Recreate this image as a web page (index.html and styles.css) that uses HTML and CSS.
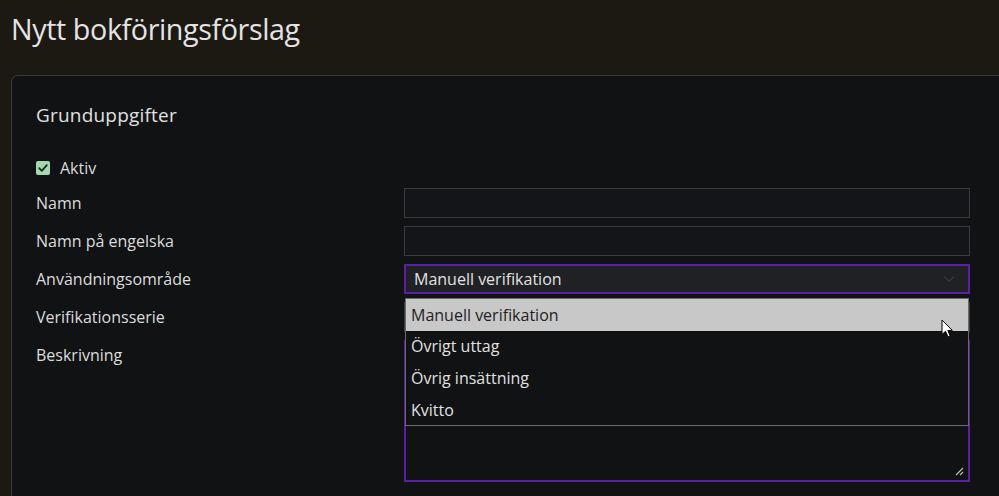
FILE: index.html
```html
<!DOCTYPE html>
<html lang="sv">
<head>
<meta charset="utf-8">
<title>Nytt bokföringsförslag</title>
<link rel="stylesheet" href="styles.css">
</head>
<body>
<h1 class="page-title">Nytt bokföringsförslag</h1>
<section class="card">
  <h2 class="card-title">Grunduppgifter</h2>
  <label class="check-row">
    <span class="checkbox"><svg viewBox="0 0 14 14" width="14" height="14"><path d="M3.2 7.2 L5.8 9.8 L10.8 4.2" fill="none" stroke="#1b2a1e" stroke-width="1.8" stroke-linecap="round" stroke-linejoin="round"/></svg></span>
    <span>Aktiv</span>
  </label>
  <div class="form-grid">
    <div class="label">Namn</div>
    <div class="field input"></div>
    <div class="label">Namn på engelska</div>
    <div class="field input"></div>
    <div class="label">Användningsområde</div>
    <div class="field-wrap">
      <div class="field select focused">
        <span>Manuell verifikation</span>
        <svg class="chev" viewBox="0 0 12 8" width="12" height="8"><path d="M1 1.5 L6 6.2 L11 1.5" fill="none" stroke="#34363a" stroke-width="1.4"/></svg>
      </div>
      <ul class="dropdown">
        <li class="opt active">Manuell verifikation</li>
        <li class="opt">Övrigt uttag</li>
        <li class="opt">Övrig insättning</li>
        <li class="opt">Kvitto</li>
      </ul>
      <svg class="cursor" viewBox="0 0 12 19" width="12" height="19"><path d="M1 1 L1 15.5 L4.5 12.3 L7 18 L9.2 17 L6.8 11.4 L11.3 11.4 Z" fill="#fff" stroke="#000" stroke-width="1"/></svg>
    </div>
    <div class="label">Verifikationsserie</div>
    <div class="field select"></div>
    <div class="label">Beskrivning</div>
    <div class="field textarea focused">
      <svg class="grip" viewBox="0 0 10 10" width="10" height="10"><path d="M9 2 L2 9 M9 6 L6 9" stroke="#bbb" stroke-width="1.2"/></svg>
    </div>
  </div>
</section>
</body>
</html>
```

FILE: styles.css
```css
html, body {
  margin: 0;
  padding: 0;
  background: #1c1913;
  overflow: hidden;
  height: 496px;
}
body {
  font-family: "Open Sans", "Liberation Sans", sans-serif;
  color: #dcdcdc;
  padding: 0 0 0 11px;
}
.page-title {
  margin: 0;
  padding-top: 9px;
  height: 75px;
  box-sizing: border-box;
  font-size: 28.7px;
  font-weight: 400;
  line-height: 40px;
  color: #e4e4e4;
  letter-spacing: -0.4px;
}
.card {
  width: 1040px;
  box-sizing: border-box;
  background: #111214;
  border: 1px solid #3a3a3a;
  border-radius: 7px;
  padding: 24px 24px 40px 24px;
  height: 440px;
}
.card-title {
  margin: 0;
  font-size: 19px;
  font-weight: 400;
  line-height: 30px;
  color: #e0e0e0;
  letter-spacing: 0.2px;
}
.check-row {
  display: flex;
  align-items: center;
  gap: 10px;
  margin-top: 26px;
  height: 24px;
  font-size: 16px;
}
.checkbox {
  width: 14px;
  height: 14px;
  background: #a6d7b0;
  border-radius: 2px;
  display: inline-flex;
}
.form-grid {
  display: grid;
  grid-template-columns: 368px 566px;
  grid-auto-rows: 30px;
  row-gap: 8px;
  margin-top: 8px;
  font-size: 16px;
}
.label {
  display: flex;
  align-items: center;
  color: #dcdcdc;
}
.field {
  box-sizing: border-box;
  background: #141518;
  border: 1px solid #3b3b3b;
}
.field-wrap {
  position: relative;
}
.select {
  height: 30px;
  display: flex;
  align-items: center;
  justify-content: space-between;
  padding: 0 9px 0 8px;
  background: #1f2124;
  color: #e2e2e2;
}
.focused {
  border: 2px solid #5a1fa6;
}
.chev {
  margin-right: 4px;
}
.textarea {
  grid-row: span 4;
  height: 142px;
  position: relative;
  background: #111214;
}
.grip {
  position: absolute;
  right: 4px;
  bottom: 4px;
}
.dropdown {
  position: absolute;
  z-index: 2;
  left: 1px;
  top: 34px;
  width: 564px;
  box-sizing: border-box;
  margin: 0;
  padding: 0;
  list-style: none;
  background: #111214;
  border: 1px solid #6a6a6a;
}
.opt {
  height: 31.6px;
  display: flex;
  align-items: center;
  padding-left: 5px;
  color: #e0e0e0;
}
.opt.active {
  background: #c8c8c8;
  color: #1f1f1f;
}
.cursor {
  position: absolute;
  z-index: 3;
  left: 537px;
  top: 55px;
}
```
